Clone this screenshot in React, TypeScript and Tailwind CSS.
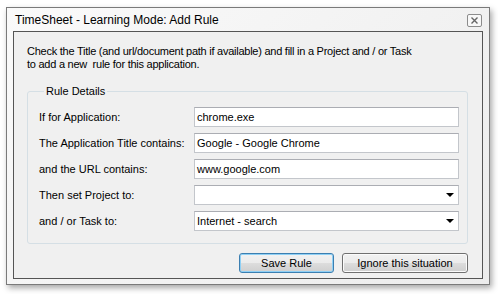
import { ReactNode } from 'react'

const rows = [
  { label: 'If for Application:', value: 'chrome.exe', combo: false },
  { label: 'The Application Title contains:', value: 'Google - Google Chrome', combo: false },
  { label: 'and the URL contains:', value: 'www.google.com', combo: false },
  { label: 'Then set Project to:', value: '', combo: true },
  { label: 'and / or Task to:', value: 'Internet - search', combo: true },
]

function Field({ value, combo }: { value: string; combo: boolean }) {
  return (
    <div className="flex h-[20px] w-[265px] items-center justify-between border border-[#c3c6cb] border-t-[#abadb3] bg-white pl-[2px] pr-[3px] text-[11px] text-black">
      <span>{value}</span>
      {combo ? (
        <svg width="8" height="4" viewBox="0 0 8 4" className="mr-[1px]">
          <path d="M0 0h8L4 4z" fill="#000" />
        </svg>
      ) : null}
    </div>
  )
}

function Button({ children, primary, width }: { children: ReactNode; primary?: boolean; width: string }) {
  return (
    <div
      className={`flex h-[20px] items-center justify-center rounded-[3px] border bg-[linear-gradient(#f2f2f2_0%,#ebebeb_50%,#dddddd_51%,#cfcfcf_100%)] text-[11px] text-black ${width} ${
        primary
          ? 'border-[#3c7fb1] shadow-[inset_0_0_0_1px_#8fd0f5]'
          : 'border-[#707070] shadow-[inset_0_0_0_1px_#fbfbfb]'
      }`}
    >
      {children}
    </div>
  )
}

export default function App() {
  return (
    <div className="h-[294px] w-[498px] bg-white pl-[6px] pt-[7px]" style={{ fontFamily: '"Liberation Sans", Arial, sans-serif' }}>
      <div className="flex h-[278px] w-[484px] flex-col border border-[#7a7a7a] bg-[linear-gradient(135deg,#fafafa,#ececec)] px-[6px] pb-[5px] shadow-[2px_3px_6px_rgba(0,0,0,0.35)]">
        <div className="flex h-[23px] items-center justify-between pl-[2px]">
          <span className="text-[12px] text-black">TimeSheet - Learning Mode: Add Rule</span>
          <div className="mr-[1px] mt-[2px] flex h-[13px] w-[15px] items-center justify-center rounded-[2px] border border-[#8c8c8c] bg-[#f8f8f8]">
            <svg width="7" height="7" viewBox="0 0 7 7">
              <path d="M0.5 0.5l6 6M6.5 0.5l-6 6" stroke="#666" strokeWidth="1.4" />
            </svg>
          </div>
        </div>
        <div className="flex flex-1 flex-col border border-[#555] bg-[#f0f0f0] pl-[13px] pr-[14px] pt-[13px]">
          <p className="text-[11px] leading-[13px] tracking-[-0.25px] text-black">
            Check the Title (and url/document path if available) and fill in a Project and / or Task
            <br />
            to add a new&nbsp; rule for this application.
          </p>
          <fieldset className="mt-[14px] rounded-[3px] border border-[#d5dfe5] pb-[12px] pl-[11px] pr-[7px] pt-[9px]">
            <legend className="ml-[5px] px-[2px] text-[11px] leading-[13px] text-black">Rule Details</legend>
            <div className="flex flex-col gap-[6px]">
              {rows.map((row) => (
                <div key={row.label} className="flex items-center">
                  <span className="w-[155px] text-[11px] text-black">{row.label}</span>
                  <Field value={row.value} combo={row.combo} />
                </div>
              ))}
            </div>
          </fieldset>
          <div className="mt-[9px] flex justify-end gap-[8px]">
            <Button primary width="w-[95px]">Save Rule</Button>
            <Button width="w-[126px]">Ignore this situation</Button>
          </div>
        </div>
      </div>
    </div>
  )
}
